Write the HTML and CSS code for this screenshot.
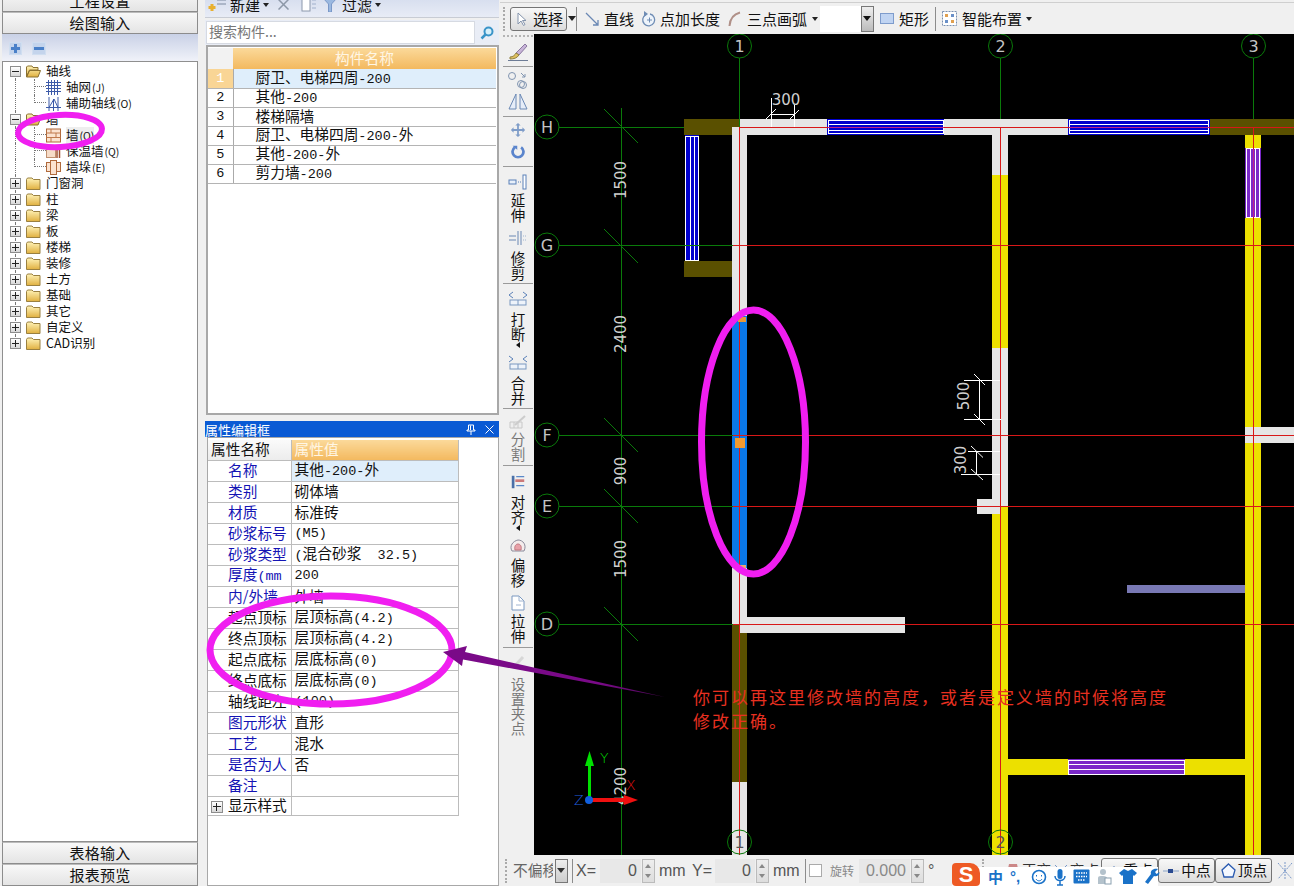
FILE: index.html
```html
<!DOCTYPE html>
<html lang="zh">
<head>
<meta charset="utf-8">
<title>绘图输入</title>
<link rel="stylesheet" href="styles.css">
</head>
<body>
<svg class="defs" width="0" height="0" aria-hidden="true">
  <defs>
    <linearGradient id="fold" x1="0" y1="0" x2="0" y2="1"><stop offset="0" stop-color="#fff3b8"/><stop offset="1" stop-color="#e0b040"/></linearGradient>
    <linearGradient id="arrowfill" x1="0" y1="0" x2="1" y2="0"><stop offset="0" stop-color="#7a0a88"/><stop offset=".7" stop-color="#7a0a88"/><stop offset="1" stop-color="#4c0856"/></linearGradient>
    <symbol id="f-closed" viewBox="0 0 15 13"><path d="M.5 2.5 L1.5 1 H6 L7.5 2.5 H14 V12.5 H.5Z" fill="url(#fold)" stroke="#9a8040"/></symbol>
    <symbol id="f-open" viewBox="0 0 15 13"><path d="M.5 12 V2 L1.5 1 H6 L7 2.5 H12 V5 H3.500 L.5 12 L3.500 5.500 H14.500 L12 12Z" fill="url(#fold)" stroke="#8a7030"/></symbol>
    <symbol id="brick" viewBox="0 0 15 14"><rect x=".5" y=".5" width="14" height="13" fill="#fbe3d0" stroke="#b06a3c"/><path d="M.5 4.500H14.500M.5 9H14.500M5 .5V4.500M10 4.500V9M5 9V13.500" stroke="#c07a4c" fill="none"/></symbol>
  </defs>
</svg>

<div class="app">
  <aside class="nav">
    <div class="navbtn first">工程设置</div>
    <div class="navbtn">绘图输入</div>
    <div class="treebar">
      <span class="tb plus"></span>
      <span class="tb minus"></span>
    </div>
    <div class="tree">
      <div class="row top"><span class="exp open"></span><svg class="fico"><use href="#f-open"/></svg><span>轴线</span></div>
      <div class="row child"><span class="twig"></span><svg class="cico" viewBox="0 0 15 15"><path d="M0 2.500H15M0 5.500H15M0 8.500H15M0 11.500H15M2.500 0V15M5.500 0V15M8.500 0V15M11.500 0V15" stroke="#3c5aa8" fill="none"/></svg><span>轴网<small>(J)</small></span></div>
      <div class="row child last"><span class="twig"></span><svg class="cico" viewBox="0 0 15 15"><path d="M0 11.500H15M3 1V15M12 1V15M3 11.500L8 3L12 11.500M7.500 3V15" stroke="#3c5aa8" fill="none"/></svg><span>辅助轴线<small>(O)</small></span></div>
      <div class="row"><span class="exp open"></span><svg class="fico"><use href="#f-open"/></svg><span>墙</span></div>
      <div class="row child sel"><span class="twig"></span><svg class="cico"><use href="#brick"/></svg><span>墙<small>(Q)</small></span></div>
      <div class="row child"><span class="twig"></span><svg class="cico" viewBox="0 0 15 15"><rect x=".5" y="1.500" width="9" height="12" fill="#f6dcc8" stroke="#c09070"/><path d="M11 1V14M13.500 1V14" stroke="#a05030" stroke-width="1.500" fill="none"/></svg><span>保温墙<small>(Q)</small></span></div>
      <div class="row child last"><span class="twig"></span><svg class="cico" viewBox="0 0 15 15"><rect x=".5" y="2.500" width="14" height="9" fill="#fbe3d0" stroke="#b06a3c"/><rect x="4.500" y=".5" width="6" height="14" fill="#fbe3d0" stroke="#b06a3c"/></svg><span>墙垛<small>(E)</small></span></div>
      <div class="row"><span class="exp"></span><svg class="fico"><use href="#f-closed"/></svg><span>门窗洞</span></div>
      <div class="row"><span class="exp"></span><svg class="fico"><use href="#f-closed"/></svg><span>柱</span></div>
      <div class="row"><span class="exp"></span><svg class="fico"><use href="#f-closed"/></svg><span>梁</span></div>
      <div class="row"><span class="exp"></span><svg class="fico"><use href="#f-closed"/></svg><span>板</span></div>
      <div class="row"><span class="exp"></span><svg class="fico"><use href="#f-closed"/></svg><span>楼梯</span></div>
      <div class="row"><span class="exp"></span><svg class="fico"><use href="#f-closed"/></svg><span>装修</span></div>
      <div class="row"><span class="exp"></span><svg class="fico"><use href="#f-closed"/></svg><span>土方</span></div>
      <div class="row"><span class="exp"></span><svg class="fico"><use href="#f-closed"/></svg><span>基础</span></div>
      <div class="row"><span class="exp"></span><svg class="fico"><use href="#f-closed"/></svg><span>其它</span></div>
      <div class="row"><span class="exp"></span><svg class="fico"><use href="#f-closed"/></svg><span>自定义</span></div>
      <div class="row end"><span class="exp"></span><svg class="fico"><use href="#f-closed"/></svg><span>CAD识别</span></div>
    </div>
    <div class="navbtn">表格输入</div>
    <div class="navbtn">报表预览</div>
  </aside>

  <section class="mid">
    <div class="comp-tools">
      <svg class="ci-new" viewBox="0 0 18 14" width="18" height="14"><path d="M9 2H18M9 6H18" stroke="#7d8aa0"/><path d="M4 6V13M.5 9.500H7.500" stroke="#e8b030" stroke-width="3"/></svg>
      <span class="ct-label">新建</span><i class="caret"></i>
      <svg class="ci-x" viewBox="0 0 11 11" width="11" height="11"><path d="M.5 .5L10.500 10.500M10.500 .5L.5 10.500" stroke="#8d98a8" stroke-width="1.500" fill="none"/></svg>
      <svg class="ci-copy" viewBox="0 0 16 14" width="16" height="14"><rect x="1" y="0" width="8" height="13" fill="#fff" stroke="#8c98ac"/><path d="M11 2H15M11 6H15M11 10H15" stroke="#a0b0cc"/></svg>
      <svg class="ci-filter" viewBox="0 0 14 14" width="14" height="14"><path d="M0 0H14L8.500 6V14H5.500V6Z" fill="#9ab8e0" stroke="#7a98c8"/></svg>
      <span class="ct-label filter">过滤</span><i class="caret"></i>
    </div>
    <div class="searchbar">
      <div class="searchbox">搜索构件...</div>
      <svg class="mag" viewBox="0 0 14 14" width="14" height="14"><circle cx="8.500" cy="5.500" r="4" fill="#d8f0fa" stroke="#3a94c8" stroke-width="2"/><path d="M5.500 8.500L1.500 12.500" stroke="#3a94c8" stroke-width="2.500"/></svg>
    </div>
    <div class="listpanel">
      <table class="clist">
        <thead><tr><th class="idx"></th><th class="hd">构件名称</th></tr></thead>
        <tbody>
          <tr class="cur"><td class="idx lat">1</td><td class="nm">厨卫、电梯四周<span class="lat">-200</span></td></tr>
          <tr><td class="idx lat">2</td><td class="nm">其他<span class="lat">-200</span></td></tr>
          <tr><td class="idx lat">3</td><td class="nm">楼梯隔墙</td></tr>
          <tr><td class="idx lat">4</td><td class="nm">厨卫、电梯四周<span class="lat">-200-</span>外</td></tr>
          <tr><td class="idx lat">5</td><td class="nm">其他<span class="lat">-200-</span>外</td></tr>
          <tr><td class="idx lat">6</td><td class="nm">剪力墙<span class="lat">-200</span></td></tr>
        </tbody>
      </table>
    </div>
    <div class="proptitle">
      <span>属性编辑框</span>
      <span class="ptbtns">
        <svg viewBox="0 0 10 11" width="10" height="11"><path d="M2.500 1H7.500V6H9V7H1V6H2.500ZM5 7V11M4.500 1.500V6" stroke="#fff" fill="none"/></svg>
        <svg viewBox="0 0 9 9" width="9" height="9"><path d="M.5 .5L8.500 8.500M8.500 .5L.5 8.500" stroke="#fff" fill="none"/></svg>
      </span>
    </div>
    <div class="propbody">
      <table class="props">
        <tr class="ph"><td class="pn hn">属性名称</td><td class="hd left">属性值</td></tr>
        <tr class="cur"><td class="pn b">名称</td><td class="pv">其他<span class="lat">-200-</span>外</td></tr>
        <tr><td class="pn b">类别</td><td class="pv">砌体墙</td></tr>
        <tr><td class="pn b">材质</td><td class="pv">标准砖</td></tr>
        <tr><td class="pn b">砂浆标号</td><td class="pv lat">(M5)</td></tr>
        <tr><td class="pn b">砂浆类型</td><td class="pv"><span class="lat">(</span>混合砂浆<span class="lat">  32.5)</span></td></tr>
        <tr><td class="pn b">厚度<span class="lat">(mm</span></td><td class="pv lat">200</td></tr>
        <tr><td class="pn b">内/外墙</td><td class="pv">外墙</td></tr>
        <tr><td class="pn">起点顶标</td><td class="pv">层顶标高<span class="lat">(4.2)</span></td></tr>
        <tr><td class="pn">终点顶标</td><td class="pv">层顶标高<span class="lat">(4.2)</span></td></tr>
        <tr><td class="pn">起点底标</td><td class="pv">层底标高<span class="lat">(0)</span></td></tr>
        <tr><td class="pn">终点底标</td><td class="pv">层底标高<span class="lat">(0)</span></td></tr>
        <tr><td class="pn">轴线距左</td><td class="pv lat">(100)</td></tr>
        <tr><td class="pn b">图元形状</td><td class="pv">直形</td></tr>
        <tr><td class="pn b">工艺</td><td class="pv">混水</td></tr>
        <tr><td class="pn b">是否为人</td><td class="pv">否</td></tr>
        <tr><td class="pn b">备注</td><td class="pv"></td></tr>
        <tr class="lastp"><td class="pn"><span class="exp inrow"></span>显示样式</td><td class="pv"></td></tr>
      </table>
    </div>
  </section>

  <section class="work">
    <div class="topbar">
      <div class="grip"></div>
      <div class="selbtn">
        <svg viewBox="0 0 12 14" width="12" height="14"><path d="M2 1V12L5 9L7.500 13.500L9 12.500L6.500 8.500H10Z" fill="#fff" stroke="#8494ac"/></svg>
        <span>选择</span>
      </div>
      <i class="caret big"></i>
      <span class="vsep"></span>
      <svg class="tico line" viewBox="0 0 14 14" width="14" height="14"><path d="M1 1L13 13M13 8V13H8" stroke="#6a88b4" fill="none" stroke-width="1.300"/></svg>
      <span class="tl-text">直线</span>
      <svg class="tico pt" viewBox="0 0 16 16" width="16" height="16"><path d="M5 3.500A6 6 0 1 0 9 3" fill="#eef4fb" stroke="#6e8cb4" stroke-width="1.300"/><path d="M8.500 6.500V11.500M6 9H11" stroke="#6e8cb4"/><path d="M3 0L7 3L3 6Z" fill="#6e8cb4"/></svg>
      <span class="tl-text">点加长度</span>
      <svg class="tico arc" viewBox="0 0 13 16" width="13" height="16"><path d="M1.500 15C2 8 6 3 12 1.500" stroke="#b09088" fill="none" stroke-width="2"/></svg>
      <span class="tl-text">三点画弧</span><i class="caret arcd"></i>
      <div class="combo"><span class="dropb"></span></div>
      <svg class="tico rect" viewBox="0 0 14 11" width="14" height="11"><rect x=".5" y=".5" width="13" height="10" fill="#c0d4f2" stroke="#7e9ccc"/></svg>
      <span class="tl-text">矩形</span>
      <span class="vsep s2"></span>
      <svg class="tico smart" viewBox="0 0 15 15" width="15" height="15"><rect x=".5" y=".5" width="14" height="14" fill="#fff" stroke="#7a90b0" stroke-dasharray="2 1"/><rect x="3" y="3" width="3" height="3" fill="#e0a050"/><rect x="9" y="3" width="3" height="3" fill="#6a90c8"/><rect x="3" y="9" width="3" height="3" fill="#6a90c8"/><rect x="9" y="9" width="3" height="3" fill="#e0a050"/></svg>
      <span class="tl-text">智能布置</span><i class="caret"></i>
    </div>

    <div class="workmid">
      <div class="strip">
        <div class="hgrip"></div>
        <div class="ti"><svg viewBox="0 0 22 20" width="22" height="20"><path d="M9 11L18 2L20 4L12 13Z" fill="#c8b4d8" stroke="#8a78a0"/><path d="M3 15C6 15 8 13 9 11L12 13C10 16 7 17 3 17Z" fill="#e0c060" stroke="#908040"/><path d="M1 18.500H21" stroke="#6d7c96"/></svg></div>
        <hr class="sp">
        <div class="ti"><svg viewBox="0 0 20 20" width="20" height="20"><circle cx="4" cy="6" r="3.500" fill="none" stroke="#8094b0"/><circle cx="13" cy="14" r="3.500" fill="none" stroke="#8094b0"/><circle cx="15" cy="15" r="3.500" fill="none" stroke="#8094b0"/><path d="M13 3L17 7M17 4V7H14" stroke="#8094b0" fill="none"/></svg></div>
        <div class="ti"><svg viewBox="0 0 20 20" width="20" height="20"><path d="M8 2V17H1ZM12 2V17H19Z" fill="#e6edf8" stroke="#6a88b4"/></svg></div>
        <hr class="sp">
        <div class="ti"><svg viewBox="0 0 18 18" width="16" height="16"><path d="M9 1L12 4H10V8H14V6L17 9L14 12V10H10V14H12L9 17L6 14H8V10H4V12L1 9L4 6V8H8V4H6Z" fill="#7e9cc8"/></svg></div>
        <div class="ti"><svg viewBox="0 0 18 18" width="14" height="14"><path d="M5 3A7 7 0 1 0 13 3" fill="none" stroke="#5a84cc" stroke-width="3.500"/><path d="M2 1H8V6Z" fill="#5a84cc"/></svg></div>
        <hr class="sp">
        <div class="ti mt2"><svg viewBox="0 0 20 16" width="20" height="16"><rect x="1" y="6" width="7" height="4" fill="#e8f0fa" stroke="#5a80b8"/><path d="M10 8H13" stroke="#5a80b8" stroke-dasharray="1 1"/><rect x="15" y="1" width="3" height="14" fill="#fff" stroke="#5a80b8"/></svg></div>
        <div class="tl">延伸</div>
        <div class="ti mt5"><svg viewBox="0 0 20 16" width="20" height="16"><path d="M1 6H8M1 10H8M10 1V15M13 1V15" stroke="#6a88b4" fill="none"/><path d="M15 6H19M15 10H19" stroke="#a0b4d0" stroke-dasharray="1 1"/></svg></div>
        <div class="tl mt2">修剪</div>
        <hr class="sp">
        <div class="ti mt2"><svg viewBox="0 0 20 16" width="20" height="16"><path d="M5 1L1 4L5 7M15 1L19 4L15 7" stroke="#5a80b8" fill="none"/><rect x="2" y="9" width="16" height="5" fill="#eef3fa" stroke="#7a98c0"/><path d="M10 9V14" stroke="#7a98c0"/></svg></div>
        <div class="tl mt2">打断</div>
        <i class="leftcaret"></i>
        <div class="ti mt4"><svg viewBox="0 0 20 16" width="20" height="16"><path d="M1 1L5 4L1 7M19 1L15 4L19 7" stroke="#5a80b8" fill="none"/><rect x="2" y="9" width="16" height="5" fill="#eef3fa" stroke="#7a98c0"/><path d="M10 9V14" stroke="#7a98c0"/></svg></div>
        <div class="tl mt2">合并</div>
        <hr class="sp">
        <div class="ti dim mt1"><svg viewBox="0 0 20 18" width="20" height="18"><path d="M2 8H14V14H2ZM6 8V14M10 8V14" stroke="#a8a8a8" fill="#eee"/><path d="M7 11L17 2" stroke="#b0b0b0" stroke-width="2"/></svg></div>
        <div class="tl dim mtn2">分割</div>
        <hr class="sp s5">
        <div class="ti mt1"><svg viewBox="0 0 18 18" width="16" height="16"><rect x="2" y="2" width="3" height="14" fill="#4a70a8"/><path d="M7 3H16M7 13H16" stroke="#5a88c8" fill="none" stroke-width="1.500"/><rect x="6" y="6" width="10" height="3" fill="#cc7a7a"/></svg></div>
        <div class="tl mt2">对齐</div>
        <i class="leftcaret"></i>
        <div class="ti mt4"><svg viewBox="0 0 18 16" width="18" height="16"><path d="M3 13C0 8 4 3 9 2C14 2 18 7 15 13Z" fill="#f4ecec" stroke="#8a8a9a"/><path d="M6 12C5 8 7 6 9 6C11 6 13 8 12 12Z" fill="#e8a0a8" stroke="#c07880"/></svg></div>
        <div class="tl mt1">偏移</div>
        <div class="ti mt5"><svg viewBox="0 0 16 16" width="16" height="16"><path d="M2 1H9L14 6V15H2Z" fill="#fff" stroke="#7a98c0"/><path d="M9 1V6H14M6 10H11" stroke="#a0b4d0" fill="none"/></svg></div>
        <div class="tl">拉伸</div>
        <hr class="sp s5">
        <div class="ti dim"><svg viewBox="0 0 18 18" width="18" height="18"><path d="M4 14L14 3" stroke="#c4c4c4" stroke-width="3"/></svg></div>
        <div class="tl dim mt3">设置夹点</div>
      </div>

      <svg class="canvas" viewBox="534 34 760 821" width="760" height="821">
        <rect x="534" y="34" width="760" height="821" fill="#000"/>
        <g shape-rendering="crispEdges">
          <rect class="gw" x="740" y="119" width="470" height="16"/>
          <rect class="ol" x="684" y="119" width="56" height="16"/>
          <rect class="ol" x="1210" y="119" width="84" height="16"/>
          <rect class="ol" x="684" y="261" width="48" height="16"/>
          <rect class="gw" x="732" y="127" width="15" height="498"/>
          <rect x="732" y="316" width="15" height="252" fill="#0a78e8"/>
          <rect class="ol" x="732" y="625" width="15" height="157"/>
          <rect class="gw" x="740" y="617" width="165" height="16"/>
          <rect class="gw" x="732" y="782" width="15" height="73"/>
          <rect class="gw" x="992" y="135" width="16" height="40"/>
          <rect class="ye" x="992" y="175" width="16" height="173"/>
          <rect class="gw" x="992" y="348" width="16" height="158"/>
          <rect class="gw" x="977" y="499" width="23" height="15"/>
          <rect class="ye" x="1000" y="506" width="8" height="8"/>
          <rect class="ye" x="992" y="514" width="16" height="341"/>
          <rect class="ye" x="1245" y="135" width="16" height="292"/>
          <rect class="gw" x="1245" y="427" width="49" height="16"/>
          <rect class="ye" x="1245" y="443" width="16" height="412"/>
          <rect class="ye" x="1008" y="759" width="237" height="16"/>
          <rect x="1127" y="585" width="118" height="8" fill="#7878b4"/>
          <!-- windows -->
          <rect class="wb" x="827" y="119" width="117" height="16"/>
          <rect class="wl" x="828.500" y="120.500" width="115" height="13"/>
          <path class="wi" d="M828 124.500H944M828 130.500H944"/>
          <rect class="wb" x="1068" y="119" width="142" height="16"/>
          <rect class="wl" x="1069.500" y="120.500" width="139" height="13"/>
          <path class="wi" d="M1069 124.500H1209M1069 130.500H1209"/>
          <rect class="wb" x="685" y="135" width="14" height="126"/>
          <rect class="wl" x="685.500" y="136.500" width="13" height="124"/>
          <path class="wi" d="M690.500 136V261M694.500 136V261"/>
          <rect class="wp" x="1245" y="148" width="16" height="70"/>
          <rect class="wl" x="1246.500" y="148.500" width="13" height="69"/>
          <path class="wi" d="M1250.500 148V218M1255.500 148V218"/>
          <rect class="wp" x="1068" y="759" width="117" height="16"/>
          <rect class="wl" x="1068.500" y="760.500" width="116" height="14"/>
          <path class="wi" d="M1068 764.500H1185M1068 769.500H1185"/>
          <!-- axis lines -->
          <path class="gl" d="M739.500 58V127M1000.500 58V119M1253.500 58V119"/>
          <path class="gl" d="M559 127.500H684M559 245.500H733M559 435.500H733M559 506.500H733M559 624.500H733"/>
          <path class="gl" d="M621.500 108V855"/>
          <path class="gl" d="M739.500 830V855M1000.500 830V855"/>
          <path class="rl" d="M740 127.500H1294M733 245.500H1294M733 435.500H1294M733 506.500H1294M733 624.500H1294"/>
          <path class="rl" d="M739.500 127V855M1000.500 127V855M1253.500 127V855"/>
          <path class="mg" d="M828 127.500H944M1069 127.500H1209"/>
          <path class="mg" d="M1253.500 149V217"/>
          <rect x="738" y="317" width="8" height="5" fill="#e89838"/>
          <rect x="735" y="438" width="10" height="10" fill="#f09a30"/>
          <rect x="738" y="565" width="8" height="5" fill="#e8a870"/>
        </g>
        <g class="tick-g">
          <path d="M604 109L638 143M604 229L638 263M604 418L638 452M604 489L638 523M604 607L638 641"/>
        </g>
        <g class="dim-w" shape-rendering="crispEdges">
          <path d="M771.500 98V127M794.500 105V127M771 114.500H794"/>
          <path d="M964 380.500H1000M964 419.500H1001M979.500 380V420"/>
          <path d="M968 451.500H1000M961 474.500H1000M976.500 451V475"/>
        </g>
        <g class="dim-w">
          <path d="M766 119L776 109M790 119L799 110"/>
          <path d="M974 374L985 385M974 414L985 425"/>
          <path d="M971 446L983 457.500M971 469L983 480"/>
        </g>
        <g class="axis-c">
          <circle cx="739.500" cy="46" r="12"/><circle cx="1000.500" cy="46" r="12"/><circle cx="1253.500" cy="46" r="12"/>
          <circle cx="547" cy="127" r="12"/><circle cx="547" cy="245" r="12"/><circle cx="547" cy="435" r="12"/><circle cx="547" cy="506" r="12"/><circle cx="547" cy="624" r="12"/>
          <circle cx="739.500" cy="842" r="12"/><circle cx="1000.500" cy="842" r="12"/>
        </g>
        <g class="axl">
          <text x="739.500" y="52">1</text><text x="1000.500" y="52">2</text><text x="1253.500" y="52">3</text>
          <text x="547" y="133">H</text><text x="547" y="251">G</text><text x="547" y="441">F</text><text x="547" y="512">E</text><text x="547" y="630">D</text>
          <text class="axd" x="739.500" y="848">1</text><text class="axd" x="1000.500" y="848">2</text>
        </g>
        <g class="dimt">
          <text x="786" y="105">300</text>
          <text transform="translate(626 180) rotate(-90)">1500</text>
          <text transform="translate(626 334) rotate(-90)">2400</text>
          <text transform="translate(626 471) rotate(-90)">900</text>
          <text transform="translate(626 559) rotate(-90)">1500</text>
          <text transform="translate(626 786) rotate(-90)">4200</text>
          <text transform="translate(969 396) rotate(-90)">500</text>
          <text transform="translate(966 460) rotate(-90)">300</text>
        </g>
        <g class="ucs">
          <path d="M589.500 800V760" stroke="#00e000" stroke-width="3"/>
          <path d="M589.500 751L594 766H585Z" fill="#00e000"/>
          <path d="M590 800H628" stroke="#f01010" stroke-width="4"/>
          <path d="M638 800L624 795V805Z" fill="#f01010"/>
          <circle cx="589" cy="800" r="4" fill="#1060e0"/>
          <text class="uy" x="600" y="763">Y</text>
          <text class="ux" x="626" y="790">X</text>
          <text class="uz" x="574" y="805">Z</text>
        </g>
      </svg>
    </div>

    <div class="status">
      <div class="grip small"></div>
      <div class="st-combo"><span class="st-clip">不偏移</span><span class="st-drop"></span></div>
      <span class="vsep st"></span>
      <span class="st-t xl">X=</span>
      <div class="st-in w41">0</div><span class="spin"></span>
      <span class="st-t mm">mm</span>
      <span class="st-t yl">Y=</span>
      <div class="st-in w39">0</div><span class="spin"></span>
      <span class="st-t mm">mm</span>
      <span class="vsep st2"></span>
      <span class="chk"></span>
      <span class="st-r">旋转</span>
      <div class="st-in w51 light">0.000</div><span class="spin"></span>
      <span class="st-t deg">°</span>
      <div class="grip small g2"></div>
      <div class="snaps">
        <span class="snap plain">
          <svg viewBox="0 0 14 14" width="14" height="14"><path d="M3 0H11L14 14H0Z" fill="#c88"/></svg>正交
        </span>
        <span class="snap plain">
          <svg viewBox="0 0 14 14" width="14" height="14"><path d="M1 1L13 13M13 1L1 13" stroke="#7a98c8" fill="none"/></svg>交点
        </span>
        <span class="snap on">
          <svg viewBox="0 0 14 14" width="14" height="14"><path d="M2 12H12M7 2V12" stroke="#5a80b8" fill="none"/></svg>重点
        </span>
        <span class="snap on">
          <svg viewBox="0 0 16 14" width="16" height="14"><path d="M0 7H16" stroke="#8aa4c8"/><rect x="5" y="5" width="5" height="4" fill="#2a4a90"/></svg>中点
        </span>
        <span class="snap on">
          <svg viewBox="0 0 15 15" width="15" height="15"><path d="M7.500 1L14 7L12 14H3L1 7Z" fill="#f4f8ff" stroke="#2a5ab0" stroke-width="1.300"/></svg>顶点
        </span>
        <svg class="snapend" viewBox="0 0 16 18" width="16" height="18"><path d="M1 1L15 17M15 1L1 17M8 0V18" stroke="#7a98c8" fill="none" stroke-dasharray="2 1"/></svg>
      </div>
    </div>
  </section>

  <svg class="marks" viewBox="0 0 1294 886" width="1294" height="886" aria-hidden="true">
    <ellipse class="mk thin" cx="60" cy="131" rx="42" ry="16" transform="rotate(-3 60 131)"/>
    <ellipse class="mk" cx="753.500" cy="442" rx="52" ry="132"/>
    <ellipse class="mk" cx="331" cy="650" rx="121" ry="54"/>
    <path d="M443 652L467 646L465 652L665 697L463 659.500L462 666Z" fill="url(#arrowfill)"/>
  </svg>

  <div class="note">你可以再这里修改墙的高度，或者是定义墙的时候将高度<br>修改正确。</div>

  <div class="ime">
    <span class="ime-s">S</span>
    <span class="ime-z">中</span>
    <span class="ime-p">°,</span>
    <svg viewBox="0 0 16 16" width="16" height="16"><circle cx="8" cy="8" r="6.500" fill="none" stroke="#1a72c8" stroke-width="1.600"/><path d="M5.500 6V7.500M10.500 6V7.500M5 10C6.500 12.500 9.500 12.500 11 10" stroke="#1a72c8" fill="none"/></svg>
    <svg viewBox="0 0 12 18" width="12" height="18"><rect x="3.500" y="1" width="5" height="10" rx="2.500" fill="#1a72c8"/><path d="M1 8C1 14 11 14 11 8M6 13V17M3 17H9" stroke="#1a72c8" fill="none" stroke-width="1.500"/></svg>
    <svg viewBox="0 0 17 15" width="17" height="15"><rect x=".5" y=".5" width="16" height="14" rx="1" fill="#1a72c8"/><path d="M3 4H14M3 7.500H14M5 11H12" stroke="#fff" stroke-width="1.500" stroke-dasharray="1.500 1"/></svg>
    <svg viewBox="0 0 15 17" width="15" height="17"><circle cx="6" cy="4" r="3" fill="#b4c2cc"/><path d="M1 16V10C1 8 3 8 6 8C9 8 10 9 10 10V16Z" fill="#b4c2cc"/><rect x="8" y="10" width="6" height="6" fill="#fff" stroke="#8aa0b0"/></svg>
    <svg viewBox="0 0 18 17" width="18" height="17"><path d="M5 1L9 3L13 1L18 5L15 8L14 7V16H4V7L3 8L0 5Z" fill="#1a72c8"/></svg>
    <svg viewBox="0 0 16 17" width="16" height="17"><path d="M14 1L11 4L12.500 6L15.500 4C15.500 8 12 9 10 8L4 16L1 14L7 6C6 3 9 0 14 1Z" fill="#1a72c8"/></svg>
  </div>
</div>
</body>
</html>
```
FILE: styles.css
```css
* { box-sizing: border-box; }
html, body { margin: 0; padding: 0; width: 1294px; height: 886px; overflow: hidden; }
body { font-family: "Noto Sans CJK SC", "Liberation Sans", sans-serif; color: #111; background: #f0f0f0; }
.defs { position: absolute; }
.app { position: relative; display: flex; width: 1294px; height: 886px; overflow: hidden; background: #f0f0f0; }
.lat { font-family: "Liberation Mono", "Noto Sans CJK SC", monospace; font-size: 13.500px; white-space: pre; }

/* left navigation */
.nav { width: 200px; flex: none; display: flex; flex-direction: column; padding: 0 2px; }
.navbtn { height: 22px; flex: none; display: flex; align-items: center; justify-content: center; padding-bottom: 2px; font-size: 15px; letter-spacing: .3px; background: linear-gradient(#f8f8f8, #e4e4e4); border: 1px solid #8c8c8c; border-top-color: #bbb; line-height: 1; }
.navbtn.first { margin-top: -10px; }
.treebar { height: 27px; flex: none; display: flex; align-items: center; gap: 10px; padding: 2px 0 0 7px; background: linear-gradient(#c9d1e6, #f0f2f9); }
.tb { position: relative; width: 13px; height: 13px; background: #c4d4ec; border: 1px solid #d0def0; }
.tb::before { content: ""; position: absolute; left: 1px; right: 1px; top: 4px; height: 3px; background: #4a80c8; }
.tb.plus::after { content: ""; position: absolute; top: 1px; bottom: 1px; left: 4px; width: 3px; background: #4a80c8; }
.tb.minus { width: 14px; }
.tree { flex: 1; background: #fff; border: 1px solid #8f8f8f; padding-top: 1px; font-size: 12.500px; line-height: 16px; }
.row { position: relative; height: 16px; display: flex; align-items: center; padding-left: 7px; white-space: nowrap; }
.row::before { content: ""; position: absolute; left: 12px; top: 0; bottom: 0; border-left: 1px dotted #777; }
.row.top::before { top: 8px; }
.row.end::before { bottom: 8px; }
.row small { font-size: 10.500px; margin-left: 1px; }
.sel > span:last-child { background: #eee; }
.exp { position: relative; flex: none; width: 11px; height: 11px; border: 1px solid #8d8d8d; background: linear-gradient(#fff, #d8d8d8); margin-right: 5px; }
.exp::before { content: ""; position: absolute; left: 1px; right: 1px; top: 4px; height: 1px; background: #222; }
.exp::after { content: ""; position: absolute; top: 1px; bottom: 1px; left: 4px; width: 1px; background: #222; }
.exp.open::after { display: none; }
.fico { flex: none; width: 15px; height: 13px; margin-right: 5px; }
.child { padding-left: 31px; }
.child::after { content: ""; position: absolute; left: 31px; top: 0; bottom: 0; border-left: 1px dotted #777; }
.child.last::after { bottom: 8px; }
.twig { flex: none; align-self: flex-start; width: 12px; height: 8px; border-bottom: 1px dotted #777; }
.cico { flex: none; width: 15px; height: 15px; margin-right: 5px; }

/* middle column */
.mid { width: 294px; flex: none; margin-left: 5px; display: flex; flex-direction: column; height: 886px; }
.comp-tools { height: 18px; flex: none; display: flex; align-items: center; padding-left: 3px; background: linear-gradient(#d8dfef, #e8ecf6); overflow: hidden; font-size: 15px; margin-bottom: 2px; border-bottom: 1px solid #c8ccd4; }
.comp-tools > * { position: relative; top: -4px; }
.ct-label { margin-left: 4px; line-height: 1; }
.caret { flex: none; display: inline-block; margin-left: 3px; width: 0; height: 0; border: 3px solid transparent; border-top: 4px solid #222; border-bottom: 0; }
.ci-x { flex: none; margin-left: 9px; }
.ci-copy { margin-left: 12px; }
.ci-filter { margin-left: 6px; }
.ct-label.filter { margin-left: 5px; }
.searchbar { height: 25px; flex: none; display: flex; align-items: center; background: #e9edf6; }
.searchbox { width: 269px; height: 23px; margin-left: 1px; background: #fff; border: 1px solid #d6dae2; color: #777; font-size: 14px; line-height: 18px; padding-left: 2px; }
.mag { margin-left: 5px; }
.listpanel { height: 370px; flex: none; margin: 0 0 6px 1px; width: 293px; border: 2px solid #a8a8a8; background: #fff; padding-top: 1px; }
table { border-collapse: collapse; table-layout: fixed; }
.clist { width: 288px; font-size: 14.700px; }
.clist th, .clist td { padding: 0; line-height: 1; }
.clist thead tr { height: 21px; }
.clist tbody tr { height: 19px; }
.clist td { border-bottom: 1px solid #b4b4b4; }
.idx { width: 25px; text-align: center; background: #fff; border-right: 1px solid #aaa; font-weight: 400; }
thead .idx { background: #f2f2f2; border-right: 0; }
.hd { background: linear-gradient(#fbd99a, #f3b95f); color: #fff6e4; font-weight: 400; text-align: center; font-size: 14.700px; }
.nm { padding-left: 22px !important; white-space: nowrap; }
.cur td { background: #dfeefb; }
.cur .idx { background: #f9d595; color: #fff; }
.proptitle { height: 16px; flex: none; display: flex; align-items: center; justify-content: space-between; background: #0a5ad4; color: #fff; font-size: 13px; padding-right: 5px; line-height: 1; }
.ptbtns { display: flex; align-items: center; gap: 9px; }
.propbody { flex: 1; margin-left: 2px; border: 1px solid #a8a8a8; background: #fff; padding-top: 2px; }
.props { width: 251px; font-size: 14.700px; }
.props tr { height: 21px; }
.props tr.ph { height: 20px; }
.props tr.lastp { height: 19px; }
.props td { padding: 0; border: 1px solid #bcbcbc; border-left: 0; border-top: 0; line-height: 1; overflow: hidden; white-space: pre; }
.pn { width: 83px; padding-left: 20px !important; position: relative; }
.pn.b { color: #1414b4; }
.pn.hn { padding-left: 3px !important; background: linear-gradient(#fafafa, #ececec); }
.pv { padding-left: 3px !important; }
.hd.left { text-align: left; padding-left: 3px !important; }
.props .cur .pn { background: #fff; }
.exp.inrow { position: absolute; left: 3px; top: 4px; width: 12px; height: 12px; }

/* work area */
.work { flex: 1; min-width: 0; margin-left: 1px; display: flex; flex-direction: column; }
.topbar { flex: none; display: flex; align-items: center; font-size: 15px; border-top: 1px solid #cfcfcf; margin-top: 2px; height: 32px; background: #f0f0f0; padding-left: 3px; }
.grip { width: 3px; height: 24px; border-left: 2px dotted #aaa; flex: none; }
.selbtn { display: flex; align-items: center; gap: 5px; width: 57px; height: 24px; margin-left: 4px; padding-left: 5px; border: 1px solid #747474; border-radius: 3px; background: linear-gradient(#f8f8f8, #dcdcdc); flex: none; white-space: nowrap; line-height: 1; }
.caret.big { margin-left: 1px; border-width: 4px; border-top-width: 5px; border-bottom: 0; }
.vsep { flex: none; width: 1px; height: 24px; background: #8c8c8c; }
.tico { flex: none; }
.tl-text { margin-left: 5px; white-space: nowrap; line-height: 1; }
.tico.line { margin-left: 8px; }
.tico.pt { margin-left: 7px; }
.tico.pt + .tl-text { margin-left: 3px; }
.tico.arc { margin-left: 8px; }
.tico.arc + .tl-text { margin-left: 6px; }
.caret.arcd { margin-left: 5px; }
.combo { flex: none; width: 54px; height: 26px; margin-left: 2px; background: #fff; display: flex; justify-content: flex-end; }
.dropb { position: relative; width: 13px; height: 26px; border: 1px solid #777; background: linear-gradient(#eee, #bbb); }
.dropb::after { content: ""; position: absolute; left: 1px; top: 9px; border: 4px solid transparent; border-top: 5px solid #111; border-bottom: 0; }
.tico.rect { margin-left: 6px; }
.vsep.s2 { margin-left: 6px; }
.tico.smart { margin-left: 6px; }
.topbar .caret:last-child { margin-left: 4px; }
.workmid { flex: 1; min-height: 0; display: flex; }
.strip { width: 34px; flex: none; padding: 1px 1px 0 3px; display: flex; flex-direction: column; align-items: center; background: #f0f0f0; overflow: hidden; }
.hgrip { flex: none; width: 100%; height: 2px; margin-bottom: 4px; border-top: 2px dotted #b4b4b4; }
.ti { flex: none; height: 22px; width: 100%; display: flex; align-items: center; justify-content: center; }
.sp { flex: none; width: 100%; height: 1px; margin: 3px 0 2px; background: #9a9a9a; border: 0; }
.sp.s5 { margin-top: 4px; margin-bottom: 4px; }
.tl { width: 15px; font-size: 14.500px; line-height: 14.500px; text-align: center; word-break: break-all; color: #111; }
.dim { opacity: .55; }
.mt1 { margin-top: 1px; } .mt2 { margin-top: 2px; } .mt3 { margin-top: 3px; } .mt4 { margin-top: 4px; } .mt5 { margin-top: 5px; } .mtn2 { margin-top: -2px; }
.leftcaret { flex: none; width: 0; height: 0; margin: 1px 0 0; border: 3px solid transparent; border-right: 4px solid #111; border-left: 0; }
.canvas { display: block; flex: none; }
.gw { fill: #e6e6e6; } .ol { fill: #5a5000; } .ye { fill: #ece000; }
.wb { fill: #0000cc; } .wp { fill: #7a28c8; }
.wl { fill: none; stroke: #fff; }
.wi { stroke: #fff; fill: none; }
.gl { stroke: #0a7a0a; fill: none; }
.rl { stroke: #d81818; fill: none; }
.mg { stroke: #c0208c; fill: none; }
.tick-g path { stroke: #0a7a0a; fill: none; }
.dim-w path { stroke: #fff; fill: none; }
.axis-c circle { fill: none; stroke: #0a7a0a; }
.axl text { font-family: "DejaVu Sans", sans-serif; font-size: 16px; fill: #c4c4c4; text-anchor: middle; }
.axl .axd { fill: #555; }
.dimt text { font-family: "DejaVu Sans", sans-serif; font-size: 15px; fill: #cfcfcf; text-anchor: middle; }
.ucs text { font-family: "DejaVu Sans", sans-serif; font-size: 14px; font-weight: 300; }
.uy { fill: #00d000; } .ux { fill: #e01010; } .uz { fill: #2060e0; }

/* status bar */
.status { height: 31px; flex: none; display: flex; align-items: center; padding-left: 5px; background: #f0f0f0; font-family: "Liberation Sans", "Noto Sans CJK SC", sans-serif; font-size: 16px; color: #555; overflow: hidden; }
.grip.small { height: 24px; }
.st-combo { display: flex; align-items: center; flex: none; margin-left: 5px; width: 55px; height: 24px; gap: 2px; }
.st-clip { width: 40px; overflow: hidden; white-space: nowrap; font-family: "Noto Sans CJK SC", sans-serif; font-size: 14.700px; color: #666; line-height: 1; }
.st-drop { position: relative; width: 13px; height: 24px; border: 1px solid #777; background: linear-gradient(#eee, #ccc); }
.st-drop::after { content: ""; position: absolute; left: 1px; top: 8px; border: 4px solid transparent; border-top: 5px solid #333; border-bottom: 0; }
.vsep.st { height: 24px; margin-left: 4px; }
.st-t { flex: none; line-height: 1; }
.xl { margin-left: 3px; width: 21px; }
.st-in { flex: none; height: 24px; margin-left: 3px; background: #e8e8e8; text-align: right; padding-right: 4px; line-height: 24px; }
.w41 { width: 41px; } .w39 { width: 40px; } .w51 { width: 51px; }
.st-in.light { color: #888; }
.spin { position: relative; flex: none; width: 13px; height: 24px; margin-left: 1px; border: 1px solid #bbb; background: linear-gradient(#eee, #ddd); }
.spin::before { content: ""; position: absolute; left: 2px; top: 4px; border: 3px solid transparent; border-bottom: 4px solid #888; border-top: 0; }
.spin::after { content: ""; position: absolute; left: 2px; bottom: 4px; border: 3px solid transparent; border-top: 4px solid #888; border-bottom: 0; }
.mm { margin-left: 4px; width: 28px; }
.yl { margin-left: 5px; width: 20px; }
.vsep.st2 { margin-left: 4px; }
.chk { flex: none; width: 13px; height: 13px; margin-left: 3px; background: #fff; border: 1px solid #aaa; }
.st-r { flex: none; margin-left: 8px; width: 26px; font-family: "Noto Sans CJK SC", sans-serif; font-size: 12px; color: #888; line-height: 1; white-space: nowrap; }
.deg { margin-left: 4px; }
.grip.g2 { margin-left: 48px; }
.snaps { display: flex; align-items: center; flex: none; margin-left: 20px; font-family: "Noto Sans CJK SC", sans-serif; font-size: 14.700px; color: #111; }
.snap { display: flex; align-items: center; justify-content: center; gap: 2px; height: 25px; line-height: 1; flex: none; white-space: nowrap; }
.snap.plain { width: 46px; color: #333; }
.snap.on { width: 57px; border: 1px solid #747474; border-radius: 3px; background: linear-gradient(#f8f8f8, #dcdcdc); }
.snap.plain + .snap.plain { width: 50px; }
.snapend { margin-left: 5px; flex: none; }

/* annotations laid over the interface */
.marks { position: absolute; left: 0; top: 0; pointer-events: none; }
.mk { fill: none; stroke: #f01ef0; stroke-width: 7; }
.mk.thin { stroke-width: 6; }
.note { position: absolute; left: 693px; top: 685px; font-size: 17px; line-height: 24px; letter-spacing: 2px; color: #e83020; white-space: nowrap; }
.ime { position: absolute; left: 952px; top: 867px; width: 206px; height: 19px; background: #fff; display: flex; align-items: center; gap: 7px; padding-right: 2px; }
.ime-s { flex: none; width: 28px; height: 23px; margin-top: -4px; background: #ee5a24; border-radius: 4px 10px 4px 4px; color: #fff; font: 700 22px/23px "Liberation Sans", sans-serif; text-align: center; }
.ime-z { flex: none; margin-left: 1px; color: #1a72c8; font-size: 15px; font-weight: 700; line-height: 1; }
.ime-p { flex: none; color: #1a72c8; font: 700 15px/1 "Liberation Sans", sans-serif; width: 14px; }
.ime svg { flex: none; }
```
